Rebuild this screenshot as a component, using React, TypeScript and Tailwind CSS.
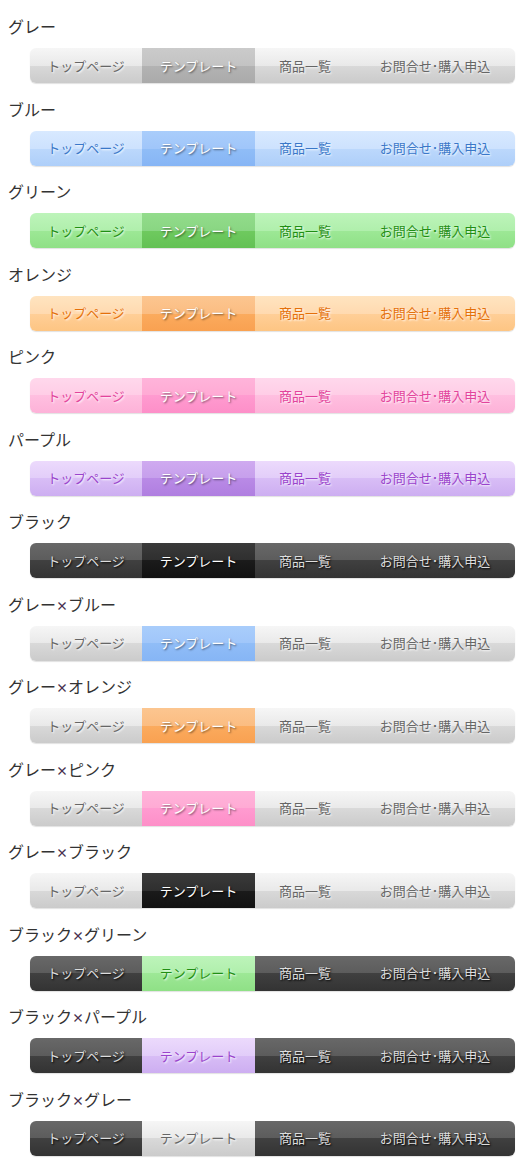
const items = ['トップページ', 'テンプレート', '商品一覧', 'お問合せ･購入申込']
const widths = ['w-[112px]', 'w-[113px]', 'w-[100px]', 'w-[160px]']

const lightShadow = '[text-shadow:1px_1px_2px_#ffffff]'
const darkShadow = '[text-shadow:1px_1px_2px_rgba(0,0,0,0.55)]'
const blackShadow = '[text-shadow:1px_1px_2px_#000000]'

const bars = {
  gray: `bg-[linear-gradient(to_bottom,#f6f6f6,#e9e9e9_50%,#d9d9d9_50%,#cbcbcb)] text-[#666666] ${lightShadow}`,
  blue: `bg-[linear-gradient(to_bottom,#d8e9ff,#cde2fe_50%,#bcd8fc_50%,#aecff9)] text-[#3a78c9] ${lightShadow}`,
  green: `bg-[linear-gradient(to_bottom,#bdf4ba,#b0efac_50%,#9de896_50%,#8fe086)] text-[#1f8f14] ${lightShadow}`,
  orange: `bg-[linear-gradient(to_bottom,#ffe4c0,#ffdab0_50%,#ffcf98_50%,#fdc583)] text-[#e4700a] ${lightShadow}`,
  pink: `bg-[linear-gradient(to_bottom,#ffd8ec,#ffcde6_50%,#ffbfe0_50%,#fdb2d8)] text-[#e2449c] ${lightShadow}`,
  purple: `bg-[linear-gradient(to_bottom,#ecdafc,#e2cdf9_50%,#d8bdf6_50%,#cdaef1)] text-[#9a44cc] ${lightShadow}`,
  black: `bg-[linear-gradient(to_bottom,#686868,#5c5c5c_50%,#404040_50%,#333333)] text-[#dddddd] ${blackShadow}`,
}

const actives = {
  gray: `bg-[linear-gradient(to_bottom,#cbcbcb,#c3c3c3_50%,#b3b3b3_50%,#aaaaaa)] text-white ${darkShadow}`,
  blue: `bg-[linear-gradient(to_bottom,#a9cdfb,#a0c6fa_50%,#90bdf7_50%,#86b5f5)] text-white ${darkShadow}`,
  green: `bg-[linear-gradient(to_bottom,#93dc8c,#89d682_50%,#6fca5f_50%,#63c154)] text-white ${darkShadow}`,
  orange: `bg-[linear-gradient(to_bottom,#fcc690,#fbbd82_50%,#fbab5e_50%,#f9a151)] text-white ${darkShadow}`,
  pink: `bg-[linear-gradient(to_bottom,#ffb4da,#ffaad4_50%,#ff9bd0_50%,#fd8fc8)] text-white ${darkShadow}`,
  purple: `bg-[linear-gradient(to_bottom,#cfaaf0,#c69fec_50%,#b98ae6_50%,#b07ee0)] text-white ${darkShadow}`,
  black: `bg-[linear-gradient(to_bottom,#3a3a3a,#2f2f2f_50%,#1b1b1b_50%,#111111)] text-white ${blackShadow}`,
}

const rows: { title: string; bar: string; active: string }[] = [
  { title: 'グレー', bar: bars.gray, active: actives.gray },
  { title: 'ブルー', bar: bars.blue, active: actives.blue },
  { title: 'グリーン', bar: bars.green, active: actives.green },
  { title: 'オレンジ', bar: bars.orange, active: actives.orange },
  { title: 'ピンク', bar: bars.pink, active: actives.pink },
  { title: 'パープル', bar: bars.purple, active: actives.purple },
  { title: 'ブラック', bar: bars.black, active: actives.black },
  { title: 'グレー×ブルー', bar: bars.gray, active: actives.blue },
  { title: 'グレー×オレンジ', bar: bars.gray, active: actives.orange },
  { title: 'グレー×ピンク', bar: bars.gray, active: actives.pink },
  { title: 'グレー×ブラック', bar: bars.gray, active: actives.black },
  { title: 'ブラック×グリーン', bar: bars.black, active: bars.green },
  { title: 'ブラック×パープル', bar: bars.black, active: bars.purple },
  { title: 'ブラック×グレー', bar: bars.black, active: bars.gray },
]

function Title({ text }: { text: string }) {
  const parts = text.split('×')
  return (
    <h2 className="h-5 pl-2 text-[16px] leading-5 text-[#333333]">
      {parts[0]}
      {parts.length > 1 && (
        <>
          <span className="inline-block w-3 text-center text-[12px] font-bold text-[#4a3050]">×</span>
          {parts[1]}
        </>
      )}
    </h2>
  )
}

export default function App() {
  return (
    <div className="w-[531px] bg-white pt-4 font-['Noto_Sans_CJK_JP','Noto_Sans',sans-serif]">
      {rows.map((r) => (
        <section key={r.title} className="mb-[15.5px]">
          <Title text={r.title} />
          <nav className="mt-3 ml-[30px] w-[485px]">
            <ul className={`flex h-[35px] overflow-hidden rounded-md shadow-[0_1px_1px_rgba(0,0,0,0.12)] ${r.bar}`}>
              {items.map((label, i) => (
                <li
                  key={label}
                  className={[
                    'flex shrink-0 items-center justify-center text-[13px]',
                    widths[i],
                    i === 1 ? r.active : '',
                  ].join(' ')}
                >
                  {label}
                </li>
              ))}
            </ul>
          </nav>
        </section>
      ))}
    </div>
  )
}
